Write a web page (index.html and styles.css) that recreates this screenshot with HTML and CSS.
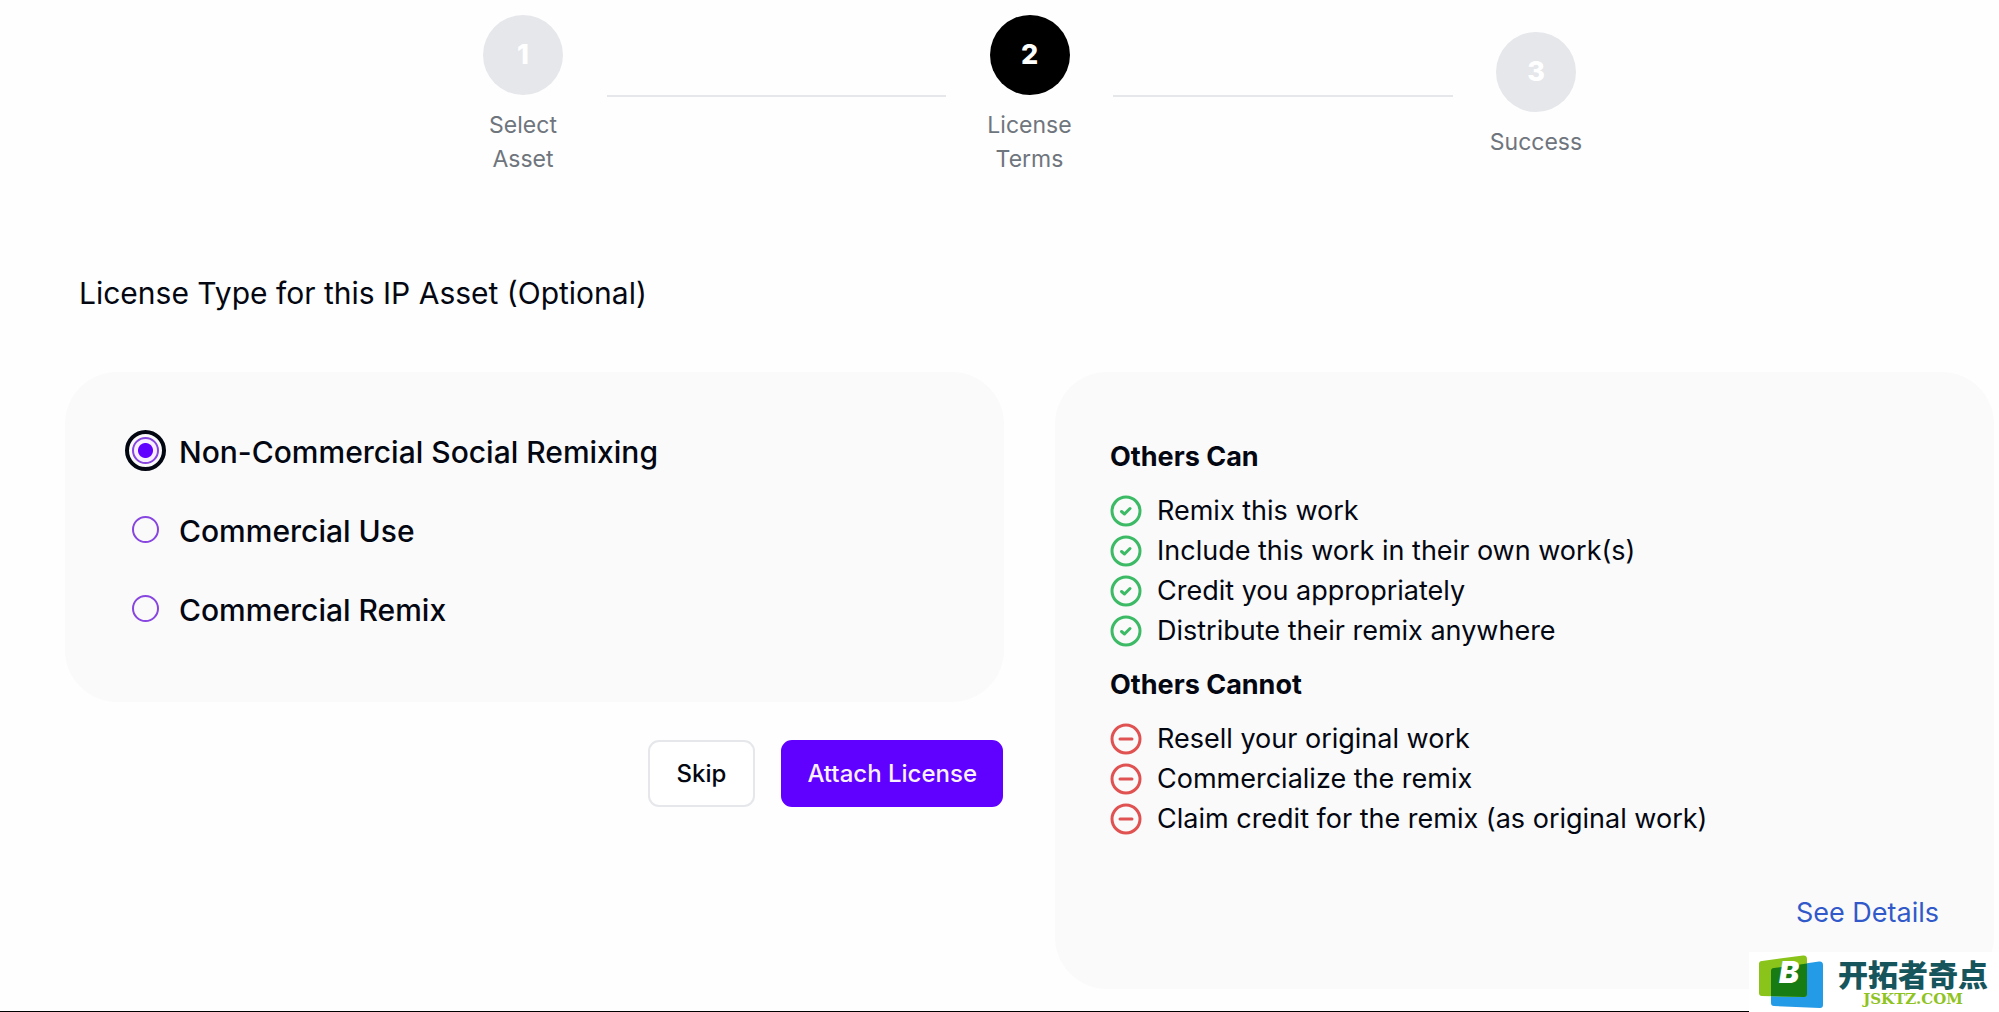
FILE: index.html
```
<!DOCTYPE html>
<html lang="en">

<head>
    <meta charset="UTF-8">
    <meta name="viewport" content="width=device-width, initial-scale=1.0">
    <title>License Terms</title>
    <link rel="stylesheet" href="styles.css">
</head>

<body>
    <!-- icons shared by the permission lists -->
    <svg class="sprite" aria-hidden="true">
        <symbol id="icon-check" viewBox="0 0 32 32">
            <circle cx="16" cy="16" r="14" />
            <path d="M11.500 16.500l3 2.500 5.500-5.500" />
        </symbol>
        <symbol id="icon-minus" viewBox="0 0 32 32">
            <circle cx="16" cy="16" r="14" />
            <path d="M10 16h12" />
        </symbol>
    </svg>

    <main class="page">
        <ol class="steps">
            <li class="step">
                <span class="step-number">1</span>
                <span class="step-label">Select Asset</span>
            </li>
            <li class="step-line" aria-hidden="true"></li>
            <li class="step active">
                <span class="step-number">2</span>
                <span class="step-label">License Terms</span>
            </li>
            <li class="step-line" aria-hidden="true"></li>
            <li class="step">
                <span class="step-number">3</span>
                <span class="step-label">Success</span>
            </li>
        </ol>

        <h1 class="title">License Type for this IP Asset (Optional)</h1>

        <form class="content">
            <div class="left">
                <div class="card options">
                    <label class="option">
                        <input type="radio" name="license" value="social" checked>
                        <span>Non-Commercial Social Remixing</span>
                    </label>
                    <label class="option">
                        <input type="radio" name="license" value="use">
                        <span>Commercial Use</span>
                    </label>
                    <label class="option">
                        <input type="radio" name="license" value="remix">
                        <span>Commercial Remix</span>
                    </label>
                </div>
                <div class="buttons">
                    <button type="button" class="btn btn-outline">Skip</button>
                    <button type="submit" class="btn btn-primary">Attach License</button>
                </div>
            </div>

            <div class="card terms">
                <h2>Others Can</h2>
                <ul class="can">
                    <li><svg class="icon"><use href="#icon-check" /></svg>Remix this work</li>
                    <li><svg class="icon"><use href="#icon-check" /></svg>Include this work in their own work(s)</li>
                    <li><svg class="icon"><use href="#icon-check" /></svg>Credit you appropriately</li>
                    <li><svg class="icon"><use href="#icon-check" /></svg>Distribute their remix anywhere</li>
                </ul>
                <h2>Others Cannot</h2>
                <ul class="cannot">
                    <li><svg class="icon"><use href="#icon-minus" /></svg>Resell your original work</li>
                    <li><svg class="icon"><use href="#icon-minus" /></svg>Commercialize the remix</li>
                    <li><svg class="icon"><use href="#icon-minus" /></svg>Claim credit for the remix (as original work)</li>
                </ul>
                <a href="#" class="details">See Details</a>
            </div>
        </form>
    </main>

    <div class="watermark">
        <svg class="watermark-logo" viewBox="0 0 66 56" aria-hidden="true">
            <path fill="#249be6" d="M16 14q-3 0-3 3v32q0 3 3 3l46 2q3 0 3-3V11q0-4-4-3.500z" />
            <path fill="#8ac41a" d="M4 7q-3 0-3 3v29q0 3 3 3l42 1q3 0 3-3V5q0-4-4-3.500z" />
            <path fill="#187c14" d="M49 9.500v30.500q0 3-3 3l-33-1V17q0-3 3-3z" />
            <text x="21" y="29" class="logo-letter">B</text>
        </svg>
        <div class="watermark-text">
            <span class="watermark-name" lang="zh">开拓者奇点</span>
            <span class="watermark-site">JSKTZ.COM</span>
        </div>
    </div>
</body>

</html>
```
FILE: styles.css
```
* {
    box-sizing: border-box;
}

body {
    margin: 0;
    min-height: 100vh;
    background-color: #fefefe;
    border-bottom: 1px solid black;
    color: #030712;
    font-family: Inter, "Noto Sans", sans-serif;
    font-size: 27px;
}

h1,
h2,
ul,
ol {
    margin: 0;
    padding: 0;
    list-style: none;
}

.sprite {
    display: none;
}

.page {
    padding: 15px 5px 20px 65px;
}

/* Steps */
.steps {
    display: flex;
    align-items: center;
    max-width: 1180px;
    margin: 0 auto;
}

.step {
    display: flex;
    flex-direction: column;
    align-items: center;
    gap: 13px;
    width: 167px;
    padding: 0 36px;
    font-size: 23px;
    line-height: 34px;
    text-align: center;
    color: #6f757d;
}

.step-number {
    display: flex;
    align-items: center;
    justify-content: center;
    width: 80px;
    height: 80px;
    border-radius: 50%;
    background: #e5e7eb;
    color: white;
    font-size: 27px;
    font-weight: 800;
}

.active .step-number {
    background: black;
}

.step-line {
    flex: 1;
    height: 2px;
    background: #e5e7eb;
}

.title {
    margin: 97px 14px 59px;
    font-size: 30px;
    font-weight: 400;
    line-height: 40px;
}

/* Panels */
.content {
    display: grid;
    grid-template-columns: 1fr 1fr;
    align-items: start;
    gap: 51px;
}

.card {
    background: #fafafa;
    border-radius: 52px;
}

.options {
    display: flex;
    flex-direction: column;
    gap: 39px;
    padding: 60px 67px 72px;
}

.option {
    display: flex;
    align-items: center;
    gap: 20px;
    font-size: 30px;
    font-weight: 500;
    line-height: 40px;
}

.option input {
    appearance: none;
    width: 27px;
    height: 27px;
    margin: 0 0 3px;
    border: 2px solid #8746e0;
    border-radius: 50%;
}

.option input:checked {
    background: radial-gradient(circle, #6000ff 7px, #f7efff 8px);
    outline: 4px solid #030712;
    outline-offset: 3px;
}

.buttons {
    display: flex;
    justify-content: flex-end;
    gap: 26px;
    margin-top: 38px;
    padding-right: 1px;
}

.btn {
    padding: 0 27px;
    border: 2px solid #e5e7eb;
    border-radius: 11px;
    background: white;
    color: #030712;
    font-family: inherit;
    font-size: 24px;
    font-weight: 500;
    line-height: 63px;
    cursor: pointer;
}

.btn-primary {
    padding: 0 24px;
    border-color: #6000ff;
    background: #6000ff;
    color: #faf0ff;
}

.terms {
    display: flex;
    flex-direction: column;
    padding: 65px 55px 56px;
}

.terms h2 {
    font-size: 27px;
    font-weight: 700;
    line-height: 40px;
}

.terms ul {
    margin: 14px 0;
}

.terms li {
    display: flex;
    align-items: center;
    gap: 15px;
    line-height: 40px;
}

.icon {
    width: 32px;
    height: 32px;
    fill: none;
    stroke-width: 3;
    stroke-linecap: round;
    stroke-linejoin: round;
}

.can .icon {
    stroke: #3cba65;
}

.cannot .icon {
    stroke: #e05252;
}

.details {
    align-self: flex-end;
    margin-top: 40px;
    color: #3159c9;
    line-height: 40px;
    text-decoration: none;
}

/* Watermark over the bottom right corner */
.watermark {
    position: absolute;
    right: 0;
    bottom: 0;
    display: flex;
    align-items: center;
    gap: 14px;
    width: 250px;
    height: 60px;
    padding-left: 9px;
    background: white;
}

.watermark-logo {
    width: 66px;
    height: 56px;
}

.logo-letter {
    fill: white;
    font-size: 30px;
    font-style: italic;
    font-weight: 900;
}

.watermark-text {
    display: flex;
    flex-direction: column;
    align-items: center;
}

.watermark-name {
    color: #17555c;
    font-family: "Noto Sans CJK SC", sans-serif;
    font-size: 30px;
    font-weight: 900;
    line-height: 34px;
}

.watermark-site {
    color: #8fc31f;
    font-family: "DejaVu Serif", serif;
    font-size: 15px;
    font-weight: 700;
    line-height: 18px;
}
```
